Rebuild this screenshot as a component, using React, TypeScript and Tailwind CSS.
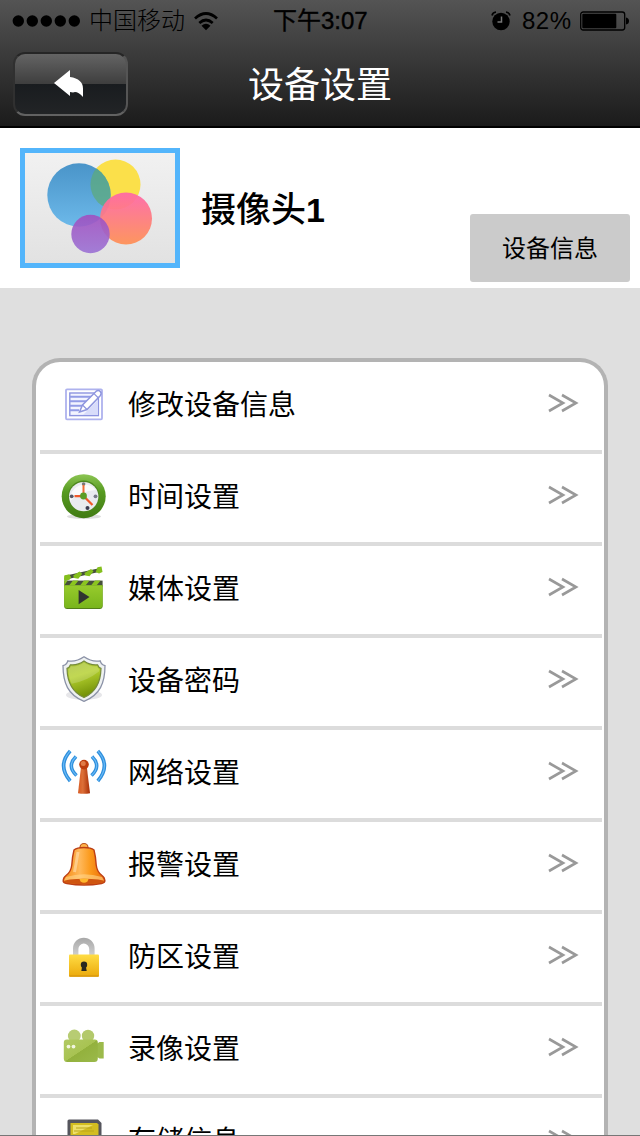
import type { ReactNode } from "react";

function EditIcon() {
  return (
    <svg viewBox="0 0 48 48" className="size-12">
      <rect x="6" y="9.3" width="36" height="30" rx="1" fill="#fff" stroke="#aeb2ee" strokeWidth="1.8" />
      <rect x="9.8" y="13" width="28.6" height="22.6" fill="#f3f4ff" stroke="#8d94e0" strokeWidth="1.4" />
      <path d="M10 16.8h22M10 21.3h17M10 25.8h13M10 30.3h9" stroke="#929be6" strokeWidth="2" />
      <path d="M23 35h15V20z" fill="#d8dcfa" />
      <path d="M19.5 32l3-7L36.2 11.2q2.2-1.6 4 .2t.2 4L27 29.5z" fill="#fff" stroke="#8f96de" strokeWidth="1.5" />
      <path d="M22.5 25l4.5 4.5M34 13.6l4.4 4.4" stroke="#8f96de" strokeWidth="1.2" />
    </svg>
  );
}

function ClockIcon() {
  return (
    <svg viewBox="0 0 48 48" className="size-12">
      <defs>
        <linearGradient id="clock-ring" x1="0" y1="0" x2="0" y2="1">
          <stop offset="0" stopColor="#8cc553" />
          <stop offset="0.4" stopColor="#569a20" />
          <stop offset="1" stopColor="#417b14" />
        </linearGradient>
      </defs>
      <ellipse cx="24" cy="44.5" rx="17" ry="2.6" fill="#ddd" />
      <circle cx="23.7" cy="24.2" r="22" fill="url(#clock-ring)" />
      <circle cx="23.7" cy="24.2" r="15.6" fill="#4c861e" />
      <circle cx="23.7" cy="24.6" r="14.7" fill="#e9ebef" />
      <path d="M10 29a14.7 14.7 0 0 1 26-11q-15 1-26 11z" fill="#fafafa" />
      <circle cx="23.6" cy="12" r="1.8" fill="#777" />
      <circle cx="35.5" cy="24.3" r="1.9" fill="#777a88" />
      <circle cx="11.7" cy="24.3" r="1.9" fill="#555764" />
      <circle cx="27.5" cy="36" r="2" fill="#3a3c50" />
      <path d="M23.5 24V13" stroke="#ef6c36" strokeWidth="2" />
      <path d="M23.5 24.2h-9M23.5 24l9 9" stroke="#f0592a" strokeWidth="2.2" />
      <circle cx="23.5" cy="24" r="3.4" fill="#5b9d25" />
    </svg>
  );
}

function ClapperIcon() {
  return (
    <svg viewBox="0 0 48 48" className="size-12">
      <defs>
        <linearGradient id="clapper-body" x1="0" y1="0" x2="0" y2="1">
          <stop offset="0" stopColor="#97cb2c" />
          <stop offset="1" stopColor="#79b51c" />
        </linearGradient>
      </defs>
      <path d="M5 11.8L39 4.2l.8 3.6L6 15.6z" fill="#46503b" />
      <path d="M4.2 11.4l5-1.2 2 3-1.7 2.6-4.500 1q-1 0-1-1.600zM19.5 7.400l2.800 2.300-4 5-4.300-.7-.8-2.500zM31 4.900l2.500 2.300-4 5-4.300-.7-.8-2.500zM37.500 3.200l4-.7 1 5.500-3.500 1.500-3.300-1.500z" fill="#84bf1d" />
      <rect x="4.2" y="16.6" width="38.4" height="6" fill="#46503b" />
      <path d="M4.2 16.6h3.500l-3.500 4.800zM13 16.600h5.500l-4 4.800H9zM24 16.600h5.500l-4 4.800H20zM35 16.600h5.500l-4 4.800H31z" fill="#8bc51f" />
      <path d="M4.2 21.3h38.4V42q0 3-3 3H7.2q-3 0-3-3z" fill="#527e17" />
      <path d="M4.2 21.3h38.4v19.900q0 2.800-3 2.800H7.200q-3 0-3-2.800z" fill="url(#clapper-body)" />
      <path d="M18.6 26v14.2L29.5 33z" fill="#303331" />
    </svg>
  );
}

function ShieldIcon() {
  return (
    <svg viewBox="0 0 48 48" className="size-12">
      <defs>
        <linearGradient id="shield-fill" x1="0" y1="0" x2="0.3" y2="1">
          <stop offset="0" stopColor="#a5bd39" />
          <stop offset="0.45" stopColor="#b4d02e" />
          <stop offset="1" stopColor="#76940a" />
        </linearGradient>
      </defs>
      <ellipse cx="24" cy="39" rx="18" ry="5" fill="#e6e6e9" />
      <path d="M24 .8Q16 6.3 7.8 4.8q-1 3.800-4.800 4.800C3 27 8 39 24 45.300 40 39 45 27 45 9.600q-3.800-1-4.800-4.800Q32 6.300 24 .8z" fill="#eef1f1" stroke="#8b92a7" strokeWidth="1.3" />
      <path d="M24 5Q17.500 9.600 10.500 8.800q-1 2.800-3.500 3.600C7.300 26 12 36 24 41.500 36 36 40.700 26 41 12.400q-2.500-.8-3.500-3.600Q30.500 9.600 24 5z" fill="url(#shield-fill)" stroke="#758a3b" strokeWidth="1.2" />
      <path d="M24 6.500Q17.500 11 11 10.300q-1 2-2.500 2.900 0 8 3.100 14.600Q27 25 39 15.500l.3-2.300q-1.600-.9-2.300-2.900Q30.500 11 24 6.500z" fill="#fff" opacity="0.18" />
    </svg>
  );
}

function AntennaIcon() {
  return (
    <svg viewBox="0 0 48 48" className="size-12">
      <defs>
        <linearGradient id="antenna-mast">
          <stop offset="0" stopColor="#d85c24" />
          <stop offset="0.4" stopColor="#dc6f38" />
          <stop offset="1" stopColor="#a72d05" />
        </linearGradient>
      </defs>
      <g fill="none" stroke="#2f8fdc" strokeWidth="3.6">
        <path d="M10.2 3Q-3 17.5 10.2 33" />
        <path d="M16 8.5Q6.4 18 16.5 27.5" />
        <path d="M37.8 3Q51 17.5 37.8 33" />
        <path d="M32 8.5Q41.6 18 31.5 27.5" />
      </g>
      <g fill="none" stroke="#6dbcf8" strokeWidth="1.1">
        <path d="M10.2 3Q-3 17.5 10.2 33" />
        <path d="M16 8.5Q6.4 18 16.5 27.5" />
        <path d="M37.8 3Q51 17.5 37.8 33" />
        <path d="M32 8.5Q41.6 18 31.5 27.5" />
      </g>
      <path d="M21 19h5.8L30 45.2q-6 1.300-12 0z" fill="url(#antenna-mast)" />
      <circle cx="24" cy="16.6" r="4.8" fill="#bd3c0e" />
      <circle cx="23.2" cy="15.4" r="2.5" fill="#e07b48" />
    </svg>
  );
}

function BellIcon() {
  return (
    <svg viewBox="0 0 48 48" className="size-12">
      <defs>
        <linearGradient id="bell-fill">
          <stop offset="0" stopColor="#f58a10" />
          <stop offset="0.4" stopColor="#ffb85a" />
          <stop offset="0.65" stopColor="#fb9a1c" />
          <stop offset="1" stopColor="#e96a08" />
        </linearGradient>
      </defs>
      <circle cx="24" cy="7.5" r="4" fill="#ffb44a" stroke="#b9521c" strokeWidth="1.2" />
      <path d="M24 7.500q-7 0-10 2.500-1.800 7-2.200 15Q11 32 6 35.500q-2.800 2-2.800 5.500Q3 42.500 7 43.500q17 3 34.500 0 3.700-1 3.300-2.500 0-3.500-2.800-5.500-5-3.500-5.800-10.500-.4-8-2.200-15-3-2.500-10-2.500z" fill="url(#bell-fill)" stroke="#bd3f14" strokeWidth="1.4" />
      <path d="M6 37q18-5.500 36 0l2 3.500H4z" fill="#ffd58c" opacity="0.6" />
      <ellipse cx="24" cy="41.6" rx="20" ry="2.8" fill="#cf5510" />
      <path d="M19.5 39q4.500-1 9 0l-1 2.500q-3.500 2.500-7 0z" fill="#ffb72c" />
      <path d="M18 12q-1.500 10-3.500 20" stroke="#ffe0b0" strokeWidth="3" fill="none" opacity="0.6" />
    </svg>
  );
}

function LockIcon() {
  return (
    <svg viewBox="0 0 48 48" className="size-12">
      <defs>
        <linearGradient id="lock-body" x1="0" y1="0" x2="0" y2="1">
          <stop offset="0" stopColor="#ffdd45" />
          <stop offset="1" stopColor="#eba90b" />
        </linearGradient>
        <linearGradient id="lock-shackle" x1="0" y1="0" x2="0" y2="1">
          <stop offset="0" stopColor="#a8a8a8" />
          <stop offset="1" stopColor="#d0d0d0" />
        </linearGradient>
      </defs>
      <path d="M13 24v-7.5a10.8 10.8 0 0 1 21.6 0V24h-5.400v-7a5.400 5.400 0 0 0-10.800 0v7z" fill="url(#lock-shackle)" />
      <rect x="9" y="22.4" width="30" height="22.4" rx="1" fill="url(#lock-body)" />
      <path d="M9.5 44h29" stroke="#d9980f" strokeWidth="1.4" />
      <circle cx="24" cy="32.8" r="3.2" fill="#29281f" />
      <path d="M22.3 33.5h3.400l1 5.500h-5.400z" fill="#29281f" />
    </svg>
  );
}

function CameraIcon() {
  return (
    <svg viewBox="0 0 48 48" className="size-12">
      <defs>
        <linearGradient id="camera-body" x1="0" y1="0" x2="1" y2="1">
          <stop offset="0" stopColor="#b1c963" />
          <stop offset="0.5" stopColor="#a8c352" />
          <stop offset="0.51" stopColor="#93b13d" />
          <stop offset="1" stopColor="#9ab94a" />
        </linearGradient>
      </defs>
      <circle cx="14.3" cy="12" r="6.4" fill="#b7cc73" />
      <circle cx="28" cy="12" r="6.2" fill="#b3c96b" />
      <path d="M36.5 20l3-2h4.200v16.600h-4.200l-3-2z" fill="#9cba4b" />
      <path d="M3.8 18.5q0-3 3-3h28q3 0 3 3v16q0 3.500-3.500 3.500h-27q-3.500 0-3.500-3.500z" fill="url(#camera-body)" />
      <circle cx="8.5" cy="22.6" r="1.9" fill="#f1f5df" />
      <circle cx="13.5" cy="22.6" r="1.9" fill="#f1f5df" />
    </svg>
  );
}

function CardIcon() {
  return (
    <svg viewBox="0 0 48 48" className="size-12">
      <path d="M9 3.4h29l3.500 3.500V45h-34V5q0-1.600 1.500-1.600z" fill="#55555d" />
      <path d="M10.5 7h26.500l1.500 1.500V42h-28z" fill="#d3bd20" />
      <path d="M13 9h20L15 18h-2z" fill="#eee06b" />
      <path d="M16 12h16M14 15h20" stroke="#baa51b" strokeWidth="1" />
    </svg>
  );
}

const items: { label: string; icon: ReactNode }[] = [
  { label: "修改设备信息", icon: <EditIcon /> },
  { label: "时间设置", icon: <ClockIcon /> },
  { label: "媒体设置", icon: <ClapperIcon /> },
  { label: "设备密码", icon: <ShieldIcon /> },
  { label: "网络设置", icon: <AntennaIcon /> },
  { label: "报警设置", icon: <BellIcon /> },
  { label: "防区设置", icon: <LockIcon /> },
  { label: "录像设置", icon: <CameraIcon /> },
  { label: "存储信息", icon: <CardIcon /> },
];

function StatusBar() {
  return (
    <div className="grid h-10 grid-cols-[273px_1fr_149px] items-center pt-px text-2xl leading-10 text-black">
      <div className="flex items-center pl-[12px]">
        <svg viewBox="0 0 70 12" className="h-3 w-[70px]">
          <circle cx="6.3" cy="6" r="5.7" />
          <circle cx="20.3" cy="6" r="5.7" />
          <circle cx="34.3" cy="6" r="5.7" />
          <circle cx="48.3" cy="6" r="5.7" />
          <circle cx="62.3" cy="6" r="5.7" />
        </svg>
        <span className="ml-[7px] w-24 font-light">中国移动</span>
        <svg viewBox="0 0 26 20" className="ml-[8px] h-5 w-[26px]">
          <path d="M2 7.5Q13-2.500 24 7.500M6.300 12Q13 6 19.700 12" fill="none" stroke="#000" strokeWidth="2.7" />
          <path d="M8.5 14.7q4.500-3.700 9 0L13 19.200z" />
        </svg>
      </div>
      <span className="whitespace-nowrap [-webkit-text-stroke:0.4px_black]">下午3:07</span>
      <div className="flex items-center">
        <svg viewBox="0 0 20 20" className="h-5 w-5">
          <circle cx="10" cy="10.5" r="8.7" />
          <path d="M1 4.5Q1.500 1.500 5 1M19 4.500q-.5-3-4-3.500" fill="none" stroke="#000" strokeWidth="1.6" />
          <path d="M10.5 5.5V11H6.500" fill="none" stroke="#777" strokeWidth="1.5" />
        </svg>
        <span className="ml-[11px] w-[50px] whitespace-nowrap tracking-[0.5px]">82%</span>
        <svg viewBox="0 0 50 20" className="ml-[8px] h-5 w-[50px]">
          <rect x="0.7" y="1" width="44" height="18" rx="2.5" fill="none" stroke="#000" strokeWidth="1.3" />
          <rect x="2.3" y="2.7" width="34" height="14.6" rx="1" />
          <path d="M46 6.5q3 .5 3 3.500t-3 3.500z" />
        </svg>
      </div>
    </div>
  );
}

function Header() {
  return (
    <header className="h-32 shrink-0 border-b-2 border-black bg-linear-to-b from-[#545454] via-[#3a3a3a] via-45% to-[#1b1b1b]">
      <StatusBar />
      <div className="grid grid-cols-[128px_1fr_128px] items-center pt-3">
        <button className="ml-[13px] flex h-16 w-[115px] items-center justify-center rounded-[12px] border-2 border-t-[#262626] border-r-[#555] border-b-[#626262] border-l-[#303030] bg-[linear-gradient(to_bottom,#646464,#3e3e3e_50%,#191c1f_50%,#222426)]">
          <svg viewBox="0 0 30 28" className="h-7 w-[30px] -translate-x-0.5">
            <path d="M0 13L16 0v7q13 2 13 11.500V27q-4.500-5-8-5l-2 .5-3-.5v4z" fill="#fff" />
          </svg>
        </button>
        <h1 className="pt-1 text-center text-4xl leading-[60px] text-white">设备设置</h1>
      </div>
    </header>
  );
}

function DeviceSummary() {
  return (
    <section className="flex h-40 shrink-0 bg-white pt-5 pr-2.5 pl-5">
      <svg viewBox="0 0 160 120" className="h-[120px] w-40">
        <defs>
          <linearGradient id="photo-bg" x1="0" y1="0" x2="0" y2="1">
            <stop offset="0" stopColor="#f1f1f1" />
            <stop offset="1" stopColor="#e2e2e2" />
          </linearGradient>
          <linearGradient id="ball-blue" x1="0" y1="0" x2="0" y2="1">
            <stop offset="0" stopColor="#3b8cc5" />
            <stop offset="1" stopColor="#62b5ea" />
          </linearGradient>
          <linearGradient id="ball-red" x1="0" y1="0" x2="0" y2="1">
            <stop offset="0" stopColor="#ff66a8" />
            <stop offset="1" stopColor="#ff9054" />
          </linearGradient>
          <linearGradient id="ball-purple" x1="0" y1="0" x2="0" y2="1">
            <stop offset="0" stopColor="#a04fc0" />
            <stop offset="1" stopColor="#9b72d4" />
          </linearGradient>
          <clipPath id="ball-overlap">
            <circle cx="59" cy="47" r="31.7" />
          </clipPath>
        </defs>
        <rect width="160" height="120" fill="#53b5fb" />
        <rect x="5" y="5" width="150" height="110" fill="url(#photo-bg)" />
        <circle cx="95.5" cy="36.5" r="25" fill="#fbe04a" />
        <circle cx="59" cy="47" r="31.7" fill="url(#ball-blue)" opacity="0.92" />
        <circle cx="95.5" cy="36.5" r="25" fill="#5cab7c" opacity="0.7" clipPath="url(#ball-overlap)" />
        <circle cx="106" cy="70.5" r="26" fill="url(#ball-red)" opacity="0.93" />
        <circle cx="70.5" cy="86" r="19.2" fill="url(#ball-purple)" opacity="0.9" />
      </svg>
      <h2 className="ml-[21px] flex-1 pt-0.5 text-[35px] leading-[120px] font-medium text-black">
        摄像头<span className="font-['Liberation_Sans'] text-[34px] font-bold">1</span>
      </h2>
      <button className="mt-[66px] h-[68px] w-40 rounded-[3px] bg-[#cbcbcb] pt-0.5 text-2xl text-black">设备信息</button>
    </section>
  );
}

export default function App() {
  return (
    <div className="flex h-[1136px] w-[640px] flex-col overflow-hidden border-b border-[#777] bg-[#dfdfdf] font-['Liberation_Sans','Noto_Sans_CJK_SC',sans-serif]">
      <Header />
      <DeviceSummary />
      <main className="mx-8 mt-[70px] shrink-0 rounded-t-[28px] border-4 border-b-0 border-[#b3b3b3] bg-white pr-0.5 pl-1">
        <ul>
          {items.map((item) => (
            <li key={item.label} className="flex h-[92px] items-center border-b-4 border-[#dcdcdc] pr-[23px] pl-5">
              <span className="-mt-1">{item.icon}</span>
              <span className="ml-5 flex-1 text-[28px] leading-[88px] text-black">{item.label}</span>
              <svg viewBox="0 0 32 20" className="-mt-1.5 h-5 w-8">
                <path d="M2 2l14 8-14 8M15 2l14 8-14 8" fill="none" stroke="#999" strokeWidth="2.6" />
              </svg>
            </li>
          ))}
        </ul>
      </main>
    </div>
  );
}
